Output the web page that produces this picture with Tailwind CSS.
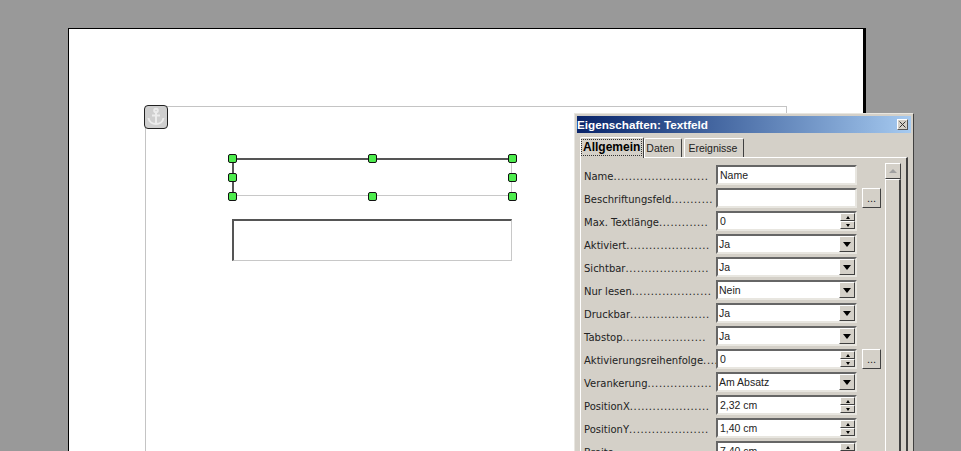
<!DOCTYPE html>
<html lang="de">
<head>
  <meta charset="UTF-8">
  <title>Eigenschaften: Textfeld</title>
  <script src="https://cdn.jsdelivr.net/npm/@tailwindcss/browser@4"></script>
</head>
<body class="bg-[#999999] overflow-hidden">
  <div class="relative w-[961px] h-[451px] overflow-hidden font-['Liberation_Sans',sans-serif] text-[11px] text-[#222]">

    <!-- page -->
    <div class="absolute left-[68px] top-[28px] w-[798px] h-[440px] bg-white border-t border-l border-black border-r-[3px]"></div>

    <!-- frame -->
    <div class="absolute left-[145px] top-[106px] w-[642px] h-[360px] border-t border-l border-r border-[#c4c4c4]"></div>

    <!-- anchor -->
    <div class="absolute left-[144px] top-[105px] w-[24px] h-[24px] rounded-[4px] border border-[#222] bg-[#cfcfcf] flex items-center justify-center">
      <svg width="20" height="20" viewBox="0 0 20 20" fill="none" stroke="#ececec" stroke-width="2">
        <circle cx="10" cy="3.5" r="1.8"/>
        <path d="M10 5.5V17M6 8.5h8M2.5 11c0.5 4 4 6 7.5 6s7-2 7.5-6"/>
      </svg>
    </div>

    <!-- text fields on the canvas -->
    <div class="absolute left-[232px] top-[158px] w-[280px] h-[38px] border-t-2 border-l-2 border-[#555] border-b border-r border-b-[#c8c8c8] border-r-[#c8c8c8]"></div>
    <div class="absolute left-[232px] top-[219px] w-[280px] h-[42px] border-t-2 border-l-2 border-[#555] border-b border-r border-b-[#c8c8c8] border-r-[#c8c8c8]"></div>

    <!-- handles -->
    <div class="absolute left-[228px] top-[154px] w-[9px] h-[9px] rounded-[2px] bg-[#4dec4d] border border-[#111]"></div>
    <div class="absolute left-[368px] top-[154px] w-[9px] h-[9px] rounded-[2px] bg-[#4dec4d] border border-[#111]"></div>
    <div class="absolute left-[508px] top-[154px] w-[9px] h-[9px] rounded-[2px] bg-[#4dec4d] border border-[#111]"></div>
    <div class="absolute left-[228px] top-[173px] w-[9px] h-[9px] rounded-[2px] bg-[#4dec4d] border border-[#111]"></div>
    <div class="absolute left-[508px] top-[173px] w-[9px] h-[9px] rounded-[2px] bg-[#4dec4d] border border-[#111]"></div>
    <div class="absolute left-[228px] top-[192px] w-[9px] h-[9px] rounded-[2px] bg-[#4dec4d] border border-[#111]"></div>
    <div class="absolute left-[368px] top-[192px] w-[9px] h-[9px] rounded-[2px] bg-[#4dec4d] border border-[#111]"></div>
    <div class="absolute left-[508px] top-[192px] w-[9px] h-[9px] rounded-[2px] bg-[#4dec4d] border border-[#111]"></div>

    <!-- properties dialog -->
    <div class="absolute left-[574px] top-[113px] w-[340px] h-[360px] bg-[#d4d0c8] border border-t-[#e8e6e0] border-l-[#e8e6e0] border-r-[#404040] border-b-[#404040] p-[2px] flex flex-col">
      <div class="h-[17px] shrink-0 flex items-center justify-between pr-[3px] bg-gradient-to-r from-[#0a246a] to-[#a6caf0] text-white font-bold text-[11.7px]">
        <span>Eigenschaften: Textfeld</span>
        <span class="w-[11px] h-[11px] bg-[#d4d0c8] border border-t-white border-l-white border-r-[#555] border-b-[#555] flex items-center justify-center">
          <svg width="7" height="7" viewBox="0 0 7 7" stroke="#333" stroke-width="1"><path d="M0.5 0.5l6 6M6.5 0.5l-6 6"/></svg>
        </span>
      </div>

      <!-- tabs -->
      <div class="h-[21px] mt-[3px] shrink-0 flex items-end pl-[3px] text-[10.5px] relative z-10">
        <div class="h-[21px] -mb-[1px] pl-[1px] pr-[2px] pt-[2px] bg-[#d4d0c8] border-t border-l border-white border-r border-r-[#404040] rounded-t-[2px]">
          <span class="block h-[15px] px-[1px] leading-[14px] font-bold text-[12px] text-black outline-1 outline-dotted outline-[#333]">Allgemein</span>
        </div>
        <div class="h-[19px] pl-[1px] pr-[7px] leading-[18px] border-t border-l border-white border-r border-r-[#404040] rounded-t-[2px]">Daten</div>
        <div class="h-[19px] pl-[3px] pr-[6px] ml-[2px] leading-[18px] border-t border-l border-white border-r border-r-[#404040] rounded-t-[2px]">Ereignisse</div>
      </div>

      <!-- tab page -->
      <div class="relative w-[328px] ml-[3px] grow border-t border-l border-white border-r-2 border-r-[#404040] flex">
        <div class="w-[304px] shrink-0 pl-[3px] pt-[7px] flex flex-col gap-[3px]">

          <div class="flex items-center h-[20px]">
            <div class="w-[132px] whitespace-nowrap mt-[2px] font-['DejaVu_Sans',sans-serif] text-[10px]">Name<span class="tracking-[0.62px]">.........................</span></div>
            <div class="w-[141px] h-[20px] bg-white border-2 border-t-[#666] border-l-[#666] border-r-[#e8e6e0] border-b-[#e8e6e0] pl-[2px] leading-[16px] text-[10.5px]">Name</div>
          </div>

          <div class="flex items-center h-[20px]">
            <div class="w-[132px] whitespace-nowrap mt-[2px] font-['DejaVu_Sans',sans-serif] text-[10px]">Beschriftungsfeld<span class="tracking-[0.62px]">...........</span></div>
            <div class="w-[141px] h-[20px] bg-white border-2 border-t-[#666] border-l-[#666] border-r-[#e8e6e0] border-b-[#e8e6e0]"></div>
            <div class="w-[19px] h-[20px] ml-[5px] bg-[#d4d0c8] border border-t-white border-l-white border-r-[#404040] border-b-[#404040] text-center leading-[18px]">...</div>
          </div>

          <div class="flex items-center h-[20px]">
            <div class="w-[132px] whitespace-nowrap mt-[2px] font-['DejaVu_Sans',sans-serif] text-[10px]">Max. Textlänge<span class="tracking-[0.62px]">.............</span></div>
            <div class="w-[141px] h-[20px] bg-white border-2 border-t-[#666] border-l-[#666] border-r-[#e8e6e0] border-b-[#e8e6e0] pl-[2px] leading-[16px] text-[10.5px] flex justify-between">
              <span>0</span>
              <span class="w-[15px] h-[16px] flex flex-col">
                <span class="h-[8px] bg-[#d4d0c8] border border-t-white border-l-white border-r-[#404040] border-b-[#404040] flex items-center justify-center"><span class="border-x-[2px] border-x-transparent border-b-[3px] border-b-black"></span></span>
                <span class="h-[8px] bg-[#d4d0c8] border border-t-white border-l-white border-r-[#404040] border-b-[#404040] flex items-center justify-center"><span class="border-x-[2px] border-x-transparent border-t-[3px] border-t-black"></span></span>
              </span>
            </div>
          </div>

          <div class="flex items-center h-[20px]">
            <div class="w-[132px] whitespace-nowrap mt-[2px] font-['DejaVu_Sans',sans-serif] text-[10px]">Aktiviert<span class="tracking-[0.62px]">......................</span></div>
            <div class="w-[141px] h-[20px] bg-white border-2 border-t-[#666] border-l-[#666] border-r-[#e8e6e0] border-b-[#e8e6e0] pl-[1px] leading-[16px] text-[10.5px] flex justify-between">
              <span>Ja</span>
              <span class="w-[16px] h-[16px] bg-[#d4d0c8] border border-t-white border-l-white border-r-[#404040] border-b-[#404040] flex items-center justify-center"><span class="border-x-[4px] border-x-transparent border-t-[5px] border-t-black"></span></span>
            </div>
          </div>

          <div class="flex items-center h-[20px]">
            <div class="w-[132px] whitespace-nowrap mt-[2px] font-['DejaVu_Sans',sans-serif] text-[10px]">Sichtbar<span class="tracking-[0.62px]">......................</span></div>
            <div class="w-[141px] h-[20px] bg-white border-2 border-t-[#666] border-l-[#666] border-r-[#e8e6e0] border-b-[#e8e6e0] pl-[1px] leading-[16px] text-[10.5px] flex justify-between">
              <span>Ja</span>
              <span class="w-[16px] h-[16px] bg-[#d4d0c8] border border-t-white border-l-white border-r-[#404040] border-b-[#404040] flex items-center justify-center"><span class="border-x-[4px] border-x-transparent border-t-[5px] border-t-black"></span></span>
            </div>
          </div>

          <div class="flex items-center h-[20px]">
            <div class="w-[132px] whitespace-nowrap mt-[2px] font-['DejaVu_Sans',sans-serif] text-[10px]">Nur lesen<span class="tracking-[0.62px]">.....................</span></div>
            <div class="w-[141px] h-[20px] bg-white border-2 border-t-[#666] border-l-[#666] border-r-[#e8e6e0] border-b-[#e8e6e0] pl-[1px] leading-[16px] text-[10.5px] flex justify-between">
              <span>Nein</span>
              <span class="w-[16px] h-[16px] bg-[#d4d0c8] border border-t-white border-l-white border-r-[#404040] border-b-[#404040] flex items-center justify-center"><span class="border-x-[4px] border-x-transparent border-t-[5px] border-t-black"></span></span>
            </div>
          </div>

          <div class="flex items-center h-[20px]">
            <div class="w-[132px] whitespace-nowrap mt-[2px] font-['DejaVu_Sans',sans-serif] text-[10px]">Druckbar<span class="tracking-[0.62px]">.....................</span></div>
            <div class="w-[141px] h-[20px] bg-white border-2 border-t-[#666] border-l-[#666] border-r-[#e8e6e0] border-b-[#e8e6e0] pl-[1px] leading-[16px] text-[10.5px] flex justify-between">
              <span>Ja</span>
              <span class="w-[16px] h-[16px] bg-[#d4d0c8] border border-t-white border-l-white border-r-[#404040] border-b-[#404040] flex items-center justify-center"><span class="border-x-[4px] border-x-transparent border-t-[5px] border-t-black"></span></span>
            </div>
          </div>

          <div class="flex items-center h-[20px]">
            <div class="w-[132px] whitespace-nowrap mt-[2px] font-['DejaVu_Sans',sans-serif] text-[10px]">Tabstop<span class="tracking-[0.62px]">......................</span></div>
            <div class="w-[141px] h-[20px] bg-white border-2 border-t-[#666] border-l-[#666] border-r-[#e8e6e0] border-b-[#e8e6e0] pl-[1px] leading-[16px] text-[10.5px] flex justify-between">
              <span>Ja</span>
              <span class="w-[16px] h-[16px] bg-[#d4d0c8] border border-t-white border-l-white border-r-[#404040] border-b-[#404040] flex items-center justify-center"><span class="border-x-[4px] border-x-transparent border-t-[5px] border-t-black"></span></span>
            </div>
          </div>

          <div class="flex items-center h-[20px]">
            <div class="w-[132px] whitespace-nowrap mt-[2px] font-['DejaVu_Sans',sans-serif] text-[10px]">Aktivierungsreihenfolge<span class="tracking-[0.62px]">....</span></div>
            <div class="w-[141px] h-[20px] bg-white border-2 border-t-[#666] border-l-[#666] border-r-[#e8e6e0] border-b-[#e8e6e0] pl-[2px] leading-[16px] text-[10.5px] flex justify-between">
              <span>0</span>
              <span class="w-[15px] h-[16px] flex flex-col">
                <span class="h-[8px] bg-[#d4d0c8] border border-t-white border-l-white border-r-[#404040] border-b-[#404040] flex items-center justify-center"><span class="border-x-[2px] border-x-transparent border-b-[3px] border-b-black"></span></span>
                <span class="h-[8px] bg-[#d4d0c8] border border-t-white border-l-white border-r-[#404040] border-b-[#404040] flex items-center justify-center"><span class="border-x-[2px] border-x-transparent border-t-[3px] border-t-black"></span></span>
              </span>
            </div>
            <div class="w-[19px] h-[20px] ml-[5px] bg-[#d4d0c8] border border-t-white border-l-white border-r-[#404040] border-b-[#404040] text-center leading-[18px]">...</div>
          </div>

          <div class="flex items-center h-[20px]">
            <div class="w-[132px] whitespace-nowrap mt-[2px] font-['DejaVu_Sans',sans-serif] text-[10px]">Verankerung<span class="tracking-[0.62px]">.................</span></div>
            <div class="w-[141px] h-[20px] bg-white border-2 border-t-[#666] border-l-[#666] border-r-[#e8e6e0] border-b-[#e8e6e0] pl-[1px] leading-[16px] text-[10.5px] flex justify-between">
              <span>Am Absatz</span>
              <span class="w-[16px] h-[16px] bg-[#d4d0c8] border border-t-white border-l-white border-r-[#404040] border-b-[#404040] flex items-center justify-center"><span class="border-x-[4px] border-x-transparent border-t-[5px] border-t-black"></span></span>
            </div>
          </div>

          <div class="flex items-center h-[20px]">
            <div class="w-[132px] whitespace-nowrap mt-[2px] font-['DejaVu_Sans',sans-serif] text-[10px]">PositionX<span class="tracking-[0.62px]">.....................</span></div>
            <div class="w-[141px] h-[20px] bg-white border-2 border-t-[#666] border-l-[#666] border-r-[#e8e6e0] border-b-[#e8e6e0] pl-[2px] leading-[16px] text-[10.5px] flex justify-between">
              <span>2,32 cm</span>
              <span class="w-[15px] h-[16px] flex flex-col">
                <span class="h-[8px] bg-[#d4d0c8] border border-t-white border-l-white border-r-[#404040] border-b-[#404040] flex items-center justify-center"><span class="border-x-[2px] border-x-transparent border-b-[3px] border-b-black"></span></span>
                <span class="h-[8px] bg-[#d4d0c8] border border-t-white border-l-white border-r-[#404040] border-b-[#404040] flex items-center justify-center"><span class="border-x-[2px] border-x-transparent border-t-[3px] border-t-black"></span></span>
              </span>
            </div>
          </div>

          <div class="flex items-center h-[20px]">
            <div class="w-[132px] whitespace-nowrap mt-[2px] font-['DejaVu_Sans',sans-serif] text-[10px]">PositionY<span class="tracking-[0.62px]">.....................</span></div>
            <div class="w-[141px] h-[20px] bg-white border-2 border-t-[#666] border-l-[#666] border-r-[#e8e6e0] border-b-[#e8e6e0] pl-[2px] leading-[16px] text-[10.5px] flex justify-between">
              <span>1,40 cm</span>
              <span class="w-[15px] h-[16px] flex flex-col">
                <span class="h-[8px] bg-[#d4d0c8] border border-t-white border-l-white border-r-[#404040] border-b-[#404040] flex items-center justify-center"><span class="border-x-[2px] border-x-transparent border-b-[3px] border-b-black"></span></span>
                <span class="h-[8px] bg-[#d4d0c8] border border-t-white border-l-white border-r-[#404040] border-b-[#404040] flex items-center justify-center"><span class="border-x-[2px] border-x-transparent border-t-[3px] border-t-black"></span></span>
              </span>
            </div>
          </div>

          <div class="flex items-center h-[20px]">
            <div class="w-[132px] whitespace-nowrap mt-[2px] font-['DejaVu_Sans',sans-serif] text-[10px]">Breite<span class="tracking-[0.62px]">.......................</span></div>
            <div class="w-[141px] h-[20px] bg-white border-2 border-t-[#666] border-l-[#666] border-r-[#e8e6e0] border-b-[#e8e6e0] pl-[2px] leading-[16px] text-[10.5px] flex justify-between">
              <span>7,40 cm</span>
              <span class="w-[15px] h-[16px] flex flex-col">
                <span class="h-[8px] bg-[#d4d0c8] border border-t-white border-l-white border-r-[#404040] border-b-[#404040] flex items-center justify-center"><span class="border-x-[2px] border-x-transparent border-b-[3px] border-b-black"></span></span>
                <span class="h-[8px] bg-[#d4d0c8] border border-t-white border-l-white border-r-[#404040] border-b-[#404040] flex items-center justify-center"><span class="border-x-[2px] border-x-transparent border-t-[3px] border-t-black"></span></span>
              </span>
            </div>
          </div>

        </div>

        <!-- scrollbar -->
        <div class="w-[16px] shrink-0 mt-[5px] flex flex-col box-content">
          <div class="w-[16px] h-[16px] bg-[#d4d0c8] border border-t-white border-l-white border-r-[#404040] border-b-[#404040] flex items-center justify-center"><span class="border-x-[4px] border-x-transparent border-b-[4px] border-b-[#a0a0a0]"></span></div>
          <div class="w-[16px] grow bg-[#d4d0c8] border-l border-t border-white border-r-2 border-r-[#404040]"></div>
        </div>
      </div>
    </div>
  </div>
</body>
</html>
